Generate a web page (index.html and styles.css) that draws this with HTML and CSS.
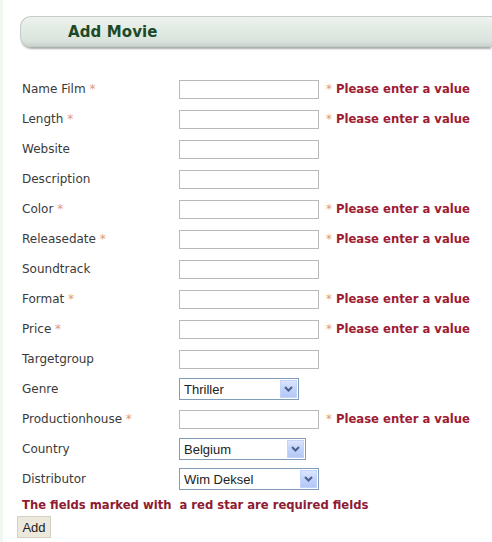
FILE: index.html
```html
<!DOCTYPE html>
<html>
<head>
<meta charset="utf-8">
<link rel="stylesheet" href="styles.css">
</head>
<body>
<div class="page">
  <div class="header"><h1 class="title">Add Movie</h1></div>
  <form class="form">
    <div class="row"><label class="lbl">Name Film <span class="star">*</span></label><input class="txt" type="text"><span class="err"><span class="star">*</span> Please enter a value</span></div>
    <div class="row"><label class="lbl">Length <span class="star">*</span></label><input class="txt" type="text"><span class="err"><span class="star">*</span> Please enter a value</span></div>
    <div class="row"><label class="lbl">Website</label><input class="txt" type="text"></div>
    <div class="row"><label class="lbl">Description</label><input class="txt" type="text"></div>
    <div class="row"><label class="lbl">Color <span class="star">*</span></label><input class="txt" type="text"><span class="err"><span class="star">*</span> Please enter a value</span></div>
    <div class="row"><label class="lbl">Releasedate <span class="star">*</span></label><input class="txt" type="text"><span class="err"><span class="star">*</span> Please enter a value</span></div>
    <div class="row"><label class="lbl">Soundtrack</label><input class="txt" type="text"></div>
    <div class="row"><label class="lbl">Format <span class="star">*</span></label><input class="txt" type="text"><span class="err"><span class="star">*</span> Please enter a value</span></div>
    <div class="row"><label class="lbl">Price <span class="star">*</span></label><input class="txt" type="text"><span class="err"><span class="star">*</span> Please enter a value</span></div>
    <div class="row"><label class="lbl">Targetgroup</label><input class="txt" type="text"></div>
    <div class="row"><label class="lbl">Genre</label>
      <div class="sel sel-genre"><span class="sel-text">Thriller</span><span class="arrow"><svg width="9" height="6" viewBox="0 0 9 6"><path d="M1 1 L4.5 4.5 L8 1" fill="none" stroke="#4a5f8c" stroke-width="2"/></svg></span></div>
    </div>
    <div class="row"><label class="lbl">Productionhouse <span class="star">*</span></label><input class="txt" type="text"><span class="err"><span class="star">*</span> Please enter a value</span></div>
    <div class="row"><label class="lbl">Country</label>
      <div class="sel sel-country"><span class="sel-text">Belgium</span><span class="arrow"><svg width="9" height="6" viewBox="0 0 9 6"><path d="M1 1 L4.5 4.5 L8 1" fill="none" stroke="#4a5f8c" stroke-width="2"/></svg></span></div>
    </div>
    <div class="row"><label class="lbl">Distributor</label>
      <div class="sel sel-dist"><span class="sel-text">Wim Deksel</span><span class="arrow"><svg width="9" height="6" viewBox="0 0 9 6"><path d="M1 1 L4.5 4.5 L8 1" fill="none" stroke="#4a5f8c" stroke-width="2"/></svg></span></div>
    </div>
    <p class="note">The fields marked with&nbsp; a red star are required fields</p>
    <button class="btn" type="button">Add</button>
  </form>
</div>
</body>
</html>
```
FILE: styles.css
```css
html, body {
  margin: 0;
  padding: 0;
  background: #ffffff;
}
.page {
  width: 492px;
  height: 542px;
  overflow: hidden;
  border-left: 3px solid #f1f8f1;
  box-sizing: border-box;
  font-family: "DejaVu Sans", Verdana, sans-serif;
}
.header {
  margin: 16px 0 0 17px;
  height: 29px;
  border-radius: 11px 0 0 11px;
  background: linear-gradient(to bottom, #eef2ef 0%, #e3ebe5 40%, #d9e3dc 85%, #c9d2cc 100%);
  border: 1px solid #c6cdc8;
  border-right: none;
  box-shadow: 0 3px 2px -1px #a9aeab;
  display: flex;
  align-items: center;
}
.title {
  margin: 1px 0 0 47px;
  font-size: 15px;
  font-weight: bold;
  color: #1c4a28;
  letter-spacing: 0.1px;
}
.form {
  margin: 27px 0 0 19px;
}
.row {
  display: flex;
  align-items: center;
  height: 30px;
}
.lbl {
  width: 157px;
  flex: none;
  font-size: 12px;
  color: #3a3a3a;
}
.star {
  color: #dc9a7c;
  font-weight: normal;
}
.txt {
  width: 140px;
  height: 19px;
  box-sizing: border-box;
  border: 1px solid #b9b9b9;
  background: #fff;
  margin: 0;
  padding: 0;
}
.err {
  margin-left: 7px;
  font-size: 11.65px;
  font-weight: bold;
  color: #9e1b33;
}
.sel {
  height: 22px;
  box-sizing: border-box;
  border: 1px solid #7f9db9;
  background: #fff;
  display: flex;
  align-items: center;
  justify-content: space-between;
  padding: 1px 1px 1px 4px;
  font-family: "Liberation Sans", Arial, sans-serif;
  font-size: 13px;
  color: #222;
}
.sel-genre { width: 120px; }
.sel-country { width: 127px; }
.sel-dist { width: 140px; }
.arrow {
  width: 17px;
  height: 18px;
  box-sizing: border-box;
  border: 1px solid #c3d3fd;
  background: linear-gradient(to bottom, #dbe5fd 0%, #c2d3fa 50%, #b4c8f5 100%);
  display: flex;
  align-items: center;
  justify-content: center;
}
.note {
  margin: 4px 0 0 0;
  font-size: 11.6px;
  font-weight: bold;
  color: #8e1a33;
  line-height: 14px;
}
.btn {
  margin: 4px 0 0 -5px;
  width: 34px;
  height: 22px;
  padding: 0;
  border: 1px solid #d4d0c4;
  background: #ece9dc;
  font-family: "Liberation Sans", Arial, sans-serif;
  font-size: 13px;
  color: #222;
}
```
